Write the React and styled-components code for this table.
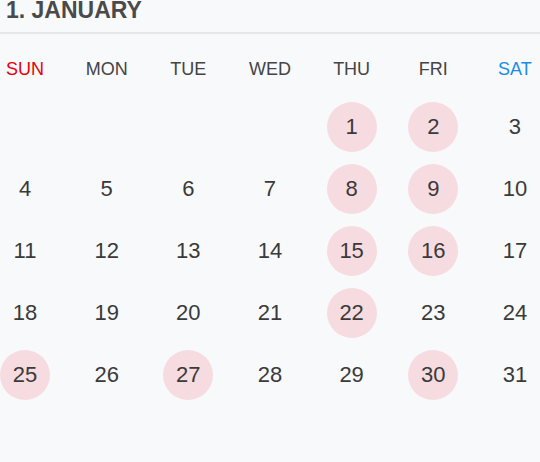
import React from 'react';
import styled, { createGlobalStyle } from 'styled-components';

const GlobalStyle = createGlobalStyle`
    html, body {
        margin: 0;
        padding: 0;
        background: #f8f9fb;
        font-family: "Liberation Sans", Arial, sans-serif;
    }
`;

const WEEKDAYS = ['SUN', 'MON', 'TUE', 'WED', 'THU', 'FRI', 'SAT'];
const MARKED = [1, 2, 8, 9, 15, 16, 22, 25, 27, 30];
const FIRST_DAY = 4; // january starts on thursday
const DAYS_IN_MONTH = 31;

const Calendar = () => {
    const cells = [];
    for (let i = 0; i < FIRST_DAY; i++) cells.push(null);
    for (let d = 1; d <= DAYS_IN_MONTH; d++) cells.push(d);

    return (
        <Page>
            <GlobalStyle />
            <MonthTitle>1. JANUARY</MonthTitle>
            <WeekRow>
                {WEEKDAYS.map((w, i) => (
                    <WeekLabel key={w} tone={i === 0 ? 'sun' : i === 6 ? 'sat' : 'plain'}>
                        {w}
                    </WeekLabel>
                ))}
            </WeekRow>
            <DayGrid>
                {cells.map((d, i) =>
                    d ? (
                        <Day key={i} marked={MARKED.includes(d)}>{d}</Day>
                    ) : (
                        <Blank key={i} />
                    )
                )}
            </DayGrid>
        </Page>
    );
};

const Page = styled.div`
    width: 540px;
    height: 462px;
    overflow: hidden;
`;

const MonthTitle = styled.h1`
    margin: 0;
    height: 32px;
    padding: 0 6px;
    font-size: 23px;
    line-height: 21px;
    font-weight: 700;
    color: #4a4a4a;
    border-bottom: 2px solid #e5e7ea;
    box-sizing: content-box;
`;

const WeekRow = styled.div`
    display: flex;
    justify-content: space-between;
    margin-top: 25px;
`;

const toneColor = {
    sun: '#e8000b',
    sat: '#1a8ce6',
    plain: '#444444',
};

const WeekLabel = styled.div`
    width: 50px;
    height: 20px;
    line-height: 20px;
    text-align: center;
    font-size: 18px;
    color: ${p => toneColor[p.tone]};
`;

const DayGrid = styled.div`
    display: grid;
    grid-template-columns: repeat(7, 50px);
    justify-content: space-between;
    row-gap: 12px;
    margin-top: 23px;
`;

const Day = styled.div`
    width: 50px;
    height: 50px;
    border-radius: 50%;
    display: flex;
    align-items: center;
    justify-content: center;
    font-size: 22px;
    color: #3a3a3a;
    background: ${p => (p.marked ? '#f6dce0' : 'transparent')};
`;

const Blank = styled.div`
    width: 50px;
    height: 50px;
`;

export default Calendar;
